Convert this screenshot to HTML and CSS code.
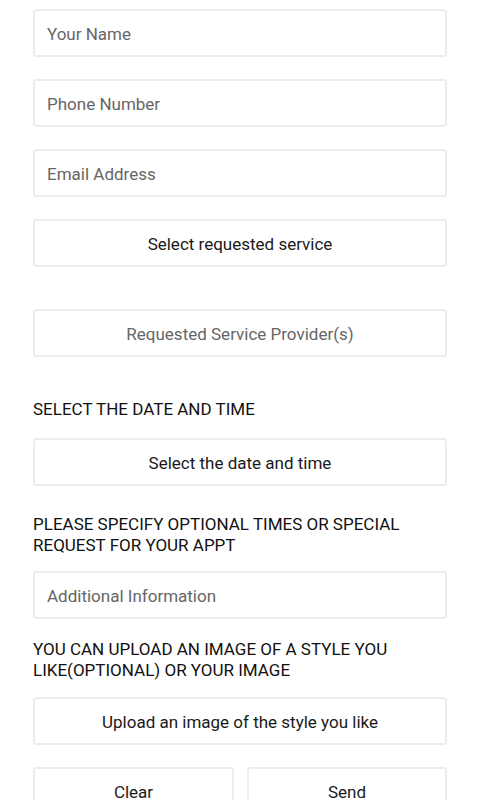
FILE: index.html
```html
<!DOCTYPE html>
<html>
<head>
<meta charset="utf-8">
<link rel="stylesheet" href="styles.css">
</head>
<body>
<form class="form">
  <div class="field placeholder">Your Name</div>
  <div class="field placeholder gap22">Phone Number</div>
  <div class="field placeholder gap22">Email Address</div>
  <div class="field btn gap22">Select requested service</div>
  <div class="field btn muted gap42">Requested Service Provider(s)</div>
  <p class="label l1">SELECT THE DATE AND TIME</p>
  <div class="field btn">Select the date and time</div>
  <p class="label l2">PLEASE SPECIFY OPTIONAL TIMES OR SPECIAL REQUEST FOR YOUR APPT</p>
  <div class="field placeholder">Additional Information</div>
  <p class="label l3">YOU CAN UPLOAD AN IMAGE OF A STYLE YOU LIKE(OPTIONAL) OR YOUR IMAGE</p>
  <div class="field btn">Upload an image of the style you like</div>
  <div class="actions">
    <div class="field btn">Clear</div>
    <div class="field btn">Send</div>
  </div>
</form>
</body>
</html>
```

FILE: styles.css
```css
html, body {
  margin: 0;
  padding: 0;
  background: #ffffff;
  overflow: hidden;
}
body {
  font-family: Roboto, "Liberation Sans", sans-serif;
  font-size: 17px;
  color: #1a1a1a;
}
.form {
  padding: 9px 33px 0 33px;
  display: flex;
  flex-direction: column;
}
.field {
  box-sizing: border-box;
  height: 48px;
  border: 2px solid #ececec;
  border-radius: 3px;
  display: flex;
  align-items: center;
  font-size: 17px;
  line-height: 20px;
  padding-top: 2px;
}
.placeholder {
  padding-left: 12px;
  color: #666666;
}
.btn {
  justify-content: center;
  color: #1a1a1a;
}
.muted {
  color: #666666;
}
.gap22 { margin-top: 22px; }
.gap42 { margin-top: 42px; }
.label {
  margin: 0;
  font-size: 17px;
  line-height: 21px;
  color: #111111;
  padding-right: 30px;
}
.l1 { margin-top: 42px; margin-bottom: 18px; }
.l2 { margin-top: 28px; margin-bottom: 15px; }
.l3 { margin-top: 20px; margin-bottom: 16px; }
.actions {
  margin-top: 22px;
  display: grid;
  grid-template-columns: 201px 200px;
  column-gap: 13px;
}
```
